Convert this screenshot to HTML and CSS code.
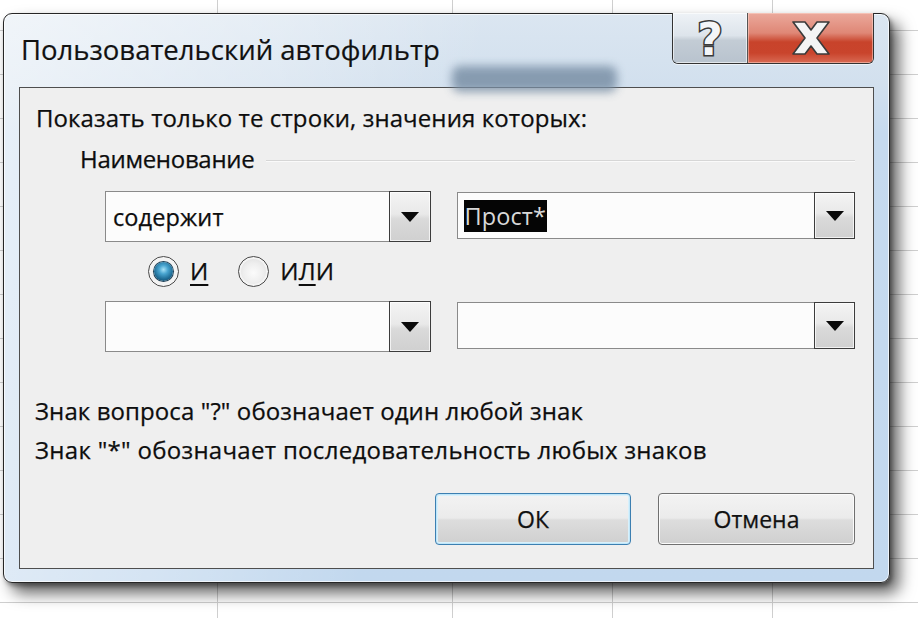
FILE: index.html
```html
<!DOCTYPE html>
<html lang="ru">
<head>
<meta charset="utf-8">
<title>Пользовательский автофильтр</title>
<link rel="stylesheet" href="styles.css">
</head>
<body>
<div class="desktop">
  <div class="window">
    <div class="titlebar">
      <div class="glass-blob"></div>
      <div class="title">Пользовательский автофильтр</div>
      <div class="caption-buttons">
        <div class="cap-btn help">
          <svg width="40" height="44" viewBox="0 0 40 44"><text x="20" y="39" text-anchor="middle" class="q">?</text></svg>
        </div>
        <div class="cap-btn close">
          <svg width="42" height="36" viewBox="0 0 42 36"><path d="M3 2 H15 L21 10 L27 2 H39 L27 18 L39 34 H27 L21 26 L15 34 H3 L15 18 Z" fill="#f4f4f4" stroke="#3a3a3a" stroke-width="1.6" stroke-linejoin="round"/></svg>
        </div>
      </div>
    </div>
    <div class="panel">
      <div class="lead">Показать только те строки, значения которых:</div>
      <div class="group"><span class="group-label">Наименование</span><span class="group-line"></span></div>
      <div class="combo-row first-row">
        <div class="combo combo-left">
          <div class="field"><span class="combo-text">содержит</span></div>
          <div class="drop"><span class="tri"></span></div>
        </div>
        <div class="combo combo-right">
          <div class="field"><span class="selected">Прост*</span></div>
          <div class="drop"><span class="tri"></span></div>
        </div>
      </div>
      <div class="radio-row">
        <div class="radio"><span class="radio-circle checked"><span class="dot"></span></span><span class="radio-label"><u>И</u></span></div>
        <div class="radio"><span class="radio-circle"></span><span class="radio-label">И<u>Л</u>И</span></div>
      </div>
      <div class="combo-row second-row">
        <div class="combo combo-left">
          <div class="field"></div>
          <div class="drop"><span class="tri"></span></div>
        </div>
        <div class="combo combo-right">
          <div class="field"></div>
          <div class="drop"><span class="tri"></span></div>
        </div>
      </div>
      <div class="hint hint-first">Знак вопроса "?" обозначает один любой знак</div>
      <div class="hint hint-second">Знак "*" обозначает последовательность любых знаков</div>
      <div class="buttons">
        <button class="btn btn-default">ОК</button>
        <button class="btn">Отмена</button>
      </div>
    </div>
  </div>
</div>
</body>
</html>
```
FILE: styles.css
```css
* { box-sizing: border-box; }

html, body {
  margin: 0;
  padding: 0;
}

body {
  width: 918px;
  height: 618px;
  overflow: hidden;
  font-family: "Open Sans", "Noto Sans", sans-serif;
  color: #0d0d0d;
  background-color: #ffffff;
  background-image:
    linear-gradient(to right, transparent 217px, #cfcfcf 217px 218px, transparent 218px 452px, #cfcfcf 452px 453px, transparent 453px 612px, #cfcfcf 612px 613px, transparent 613px 772px, #cfcfcf 772px 773px, transparent 773px),
    repeating-linear-gradient(to bottom, transparent 0 30px, #cfcfcf 30px 31px, transparent 31px 44px);
}

.desktop {
  padding: 13px 0 0 3px;
}

.window {
  width: 887px;
  height: 570px;
  border: 1px solid #262626;
  border-radius: 9px;
  padding: 0 15px 13px 15px;
  display: flex;
  flex-direction: column;
  background:
    linear-gradient(103deg, rgba(255,255,255,0.6) 0%, rgba(255,255,255,0.3) 28%, rgba(255,255,255,0) 48%),
    linear-gradient(to bottom, #dbe6f1 0px, #d2e0ee 70px, #c6daee 120px, #c2d8ee 100%);
  box-shadow: 9px 10px 16px rgba(0,0,0,0.62), 2px 3px 4px rgba(0,0,0,0.35), inset 0 0 0 1px rgba(255,255,255,0.7);
}

.titlebar {
  position: relative;
  height: 73px;
  display: flex;
  align-items: flex-start;
  justify-content: space-between;
}

.glass-blob {
  position: absolute;
  left: 433px;
  top: 52px;
  width: 165px;
  height: 26px;
  border-radius: 8px;
  background: #7a90a6;
  filter: blur(5px);
  opacity: 0.85;
}

.title {
  position: relative;
  margin: 18px 0 0 2px;
  font-size: 27.5px;
  line-height: 36px;
  color: #111;
  -webkit-text-stroke: 0.2px #111;
}

.caption-buttons {
  position: relative;
  display: flex;
  margin-top: -1px;
  height: 51px;
  border: 1px solid #333;
  border-top: none;
  border-radius: 0 0 6px 6px;
  overflow: hidden;
  box-shadow: 0 1px 0 rgba(255,255,255,0.6);
}

.cap-btn {
  display: flex;
  align-items: center;
  justify-content: center;
}

.cap-btn svg {
  overflow: visible;
}

.cap-btn.help {
  width: 75px;
  border-right: 1px solid #555;
  background: linear-gradient(to bottom, #eef2f6 0%, #dde4eb 45%, #c3ccd5 55%, #b8c3ce 100%);
  box-shadow: inset 0 0 0 1px rgba(255,255,255,0.6);
}

.cap-btn.close {
  width: 125px;
  background: linear-gradient(to bottom, #eba99c 0%, #df8776 40%, #c8432b 58%, #c9442c 80%, #d86a54 100%);
  box-shadow: inset 0 0 0 1px rgba(255,220,210,0.5);
}

.q {
  font-family: "DejaVu Sans", sans-serif;
  font-weight: bold;
  font-size: 44px;
  fill: #f4f6f8;
  stroke: #3a3a3a;
  stroke-width: 3px;
  paint-order: stroke fill;
}

.panel {
  flex: 1;
  border: 1px solid #4e4e4e;
  background: #efefef;
  padding: 15px 18px 19px 0;
  display: flex;
  flex-direction: column;
  font-size: 24px;
  letter-spacing: 0.1px;
  -webkit-text-stroke: 0.25px #0d0d0d;
}

.lead {
  line-height: 30px;
  margin-left: 16px;
}

.group {
  display: flex;
  align-items: center;
  margin: 11px 0 0 60px;
  line-height: 30px;
  letter-spacing: -0.3px;
}

.group-line {
  flex: 1;
  height: 1px;
  margin: 2px 0 0 12px;
  background: #d6d6d6;
  box-shadow: 0 1px 0 #fafafa;
}

.combo-row {
  display: flex;
  align-items: flex-start;
  margin-left: 85px;
  gap: 26px;
}

.first-row { margin-top: 17px; }
.second-row { margin-top: 13px; }

.combo {
  display: flex;
}

.combo-left {
  width: 326px;
  height: 51px;
}

.combo-right {
  width: 399px;
  height: 47px;
  margin-top: 1px;
}

.field {
  flex: 1;
  border: 1px solid #8a8a8a;
  border-right: none;
  background: #fcfcfc;
  display: flex;
  align-items: center;
  padding-left: 7px;
}

.combo-right .field {
  padding-left: 6px;
}

.combo-text {
  line-height: 30px;
  font-size: 23.5px;
}

.selected {
  background: #050505;
  color: #d8d8d8;
  -webkit-text-stroke: 0;
  line-height: 32px;
  font-size: 23.5px;
  padding: 0 1px 0 1px;
}

.drop {
  width: 42px;
  border: 1px solid #3c3c3c;
  background: linear-gradient(to bottom, #f4f4f4 0%, #e9e9e9 45%, #dadada 55%, #d0d0d0 100%);
  box-shadow: inset 0 0 0 1px rgba(255,255,255,0.7);
  display: flex;
  align-items: center;
  justify-content: center;
}

.combo-right .drop {
  width: 41px;
}

.tri {
  width: 0;
  height: 0;
  border-left: 9px solid transparent;
  border-right: 9px solid transparent;
  border-top: 10px solid #0a0a0a;
}

.radio-row {
  display: flex;
  align-items: center;
  margin: 12px 0 0 128px;
  height: 34px;
}

.radio {
  display: flex;
  align-items: center;
  font-size: 24px;
  line-height: 30px;
}

.radio + .radio {
  margin-left: 30px;
}

.radio-circle {
  width: 31px;
  height: 31px;
  border-radius: 50%;
  border: 1px solid #4a4a4a;
  background: radial-gradient(circle at 50% 55%, #fbfbfb 0%, #eeeeee 45%, #d6d6d6 100%);
  box-shadow: inset 0 0 0 2px #f4f4f4;
  display: flex;
  align-items: center;
  justify-content: center;
  margin-right: 11px;
}

.radio-circle.checked {
  background: #f3f3f3;
}

.dot {
  width: 19px;
  height: 19px;
  border-radius: 50%;
  background: radial-gradient(circle at 50% 40%, #a6e2f7 0%, #48a4cf 30%, #1d6a93 65%, #0d3550 100%);
  box-shadow: 0 0 0 1px #1d3f55;
}

.radio-label u {
  text-decoration-thickness: 2px;
  text-underline-offset: 4px;
}

.hint {
  margin-left: 15px;
  line-height: 30px;
}

.hint-first { margin-top: 44px; }
.hint-second { margin-top: 9px; letter-spacing: 0.3px; }

.buttons {
  display: flex;
  justify-content: flex-end;
  gap: 27px;
  margin-top: 28px;
}

.btn {
  width: 197px;
  height: 52px;
  font-family: inherit;
  font-size: 23px;
  color: #111;
  -webkit-text-stroke: 0.25px #111;
  border: 1px solid #707070;
  border-radius: 4px;
  background: linear-gradient(to bottom, #f3f3f3 0%, #ebebeb 48%, #dddddd 52%, #cfcfcf 100%);
  box-shadow: inset 0 0 0 1px #fbfbfb;
  padding: 0;
}

.btn-default {
  width: 196px;
  border-color: #3c7fb1;
  box-shadow: inset 0 0 0 1px #bfe6f9, inset 0 0 0 2px #d8f0fb;
}
```
